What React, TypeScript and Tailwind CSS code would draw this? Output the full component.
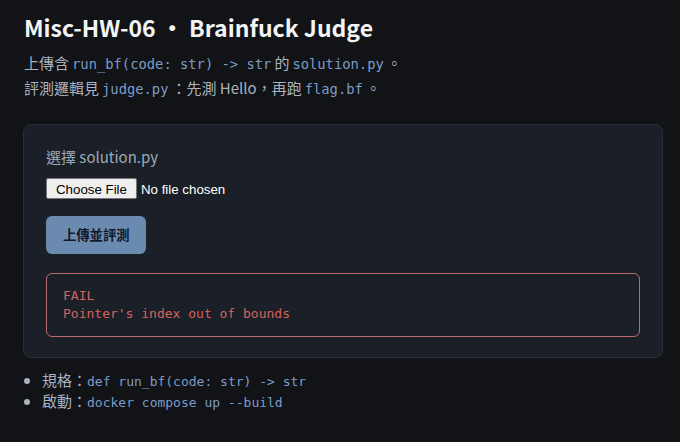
import React from 'react'

const sans = "font-['Noto_Sans_CJK_TC','Noto_Sans',sans-serif]"
const mono = "font-['DejaVu_Sans_Mono',monospace]"

function Code({ children }: { children: React.ReactNode }) {
  return <code className={`${mono} text-[13.8px] leading-none text-[#7d9cc6] mx-[3px]`}>{children}</code>
}

export default function App() {
  return (
    <div className={`min-h-screen w-full bg-[#111317] text-[#a9b2bf] ${sans} pl-[23px] pr-[17px] pt-[10px]`}>
      <h1 className="pl-px text-[23px] font-bold text-[#f3f4f6] leading-[34px]">Misc-HW-06 ・ Brainfuck Judge</h1>

      <p className="mt-[6px] pl-px text-[15px] leading-[25px]">
        上傳含<Code>run_bf(code: str) -&gt; str</Code>的<Code>solution.py</Code>。
        <br />
        評測邏輯見<Code>judge.py</Code>：先測 Hello，再跑<Code>flag.bf</Code>。
      </p>

      <div className="mt-[24px] rounded-lg border border-[#2a303a] bg-[#1b1f27] px-[22px] pt-[21px] pb-[20px]">
        <label className="block text-[15px] leading-[22px] text-[#9ea9b8]">選擇 solution.py</label>

        <div className="mt-[10px] flex h-[21px] items-center">
          <input
            type="file"
            className="font-['Liberation_Sans',Arial,sans-serif] text-[13.3px] leading-[21px] text-white file:mr-[4px] file:h-[21px] file:rounded-[2px] file:border file:border-solid file:border-[#767676] file:bg-[#efefef] file:px-[9px] file:text-[13.3px] file:text-black"
          />
        </div>

        <button className="mt-[17px] block h-[38px] rounded-md bg-[#6b8ab0] px-[17px] text-[13.3px] font-bold text-[#111827]">
          上傳並評測
        </button>

        <div className="mt-[19px] rounded-md border border-[#b96a6d] px-4 py-[13px]">
          <pre className={`${mono} text-[13px] leading-[18px] text-[#d4645e]`}>{`FAIL
Pointer's index out of bounds`}</pre>
        </div>
      </div>

      <ul className="mt-[11px] list-disc pl-[19px] text-[15px] leading-[21px] marker:text-[#a9b2bf]">
        <li className="h-[21px]">
          規格：<code className={`${mono} text-[13px] leading-none text-[#7d9cc6]`}>def run_bf(code: str) -&gt; str</code>
        </li>
        <li className="h-[21px]">
          啟動：<code className={`${mono} text-[13px] leading-none text-[#7d9cc6]`}>docker compose up --build</code>
        </li>
      </ul>
    </div>
  )
}
